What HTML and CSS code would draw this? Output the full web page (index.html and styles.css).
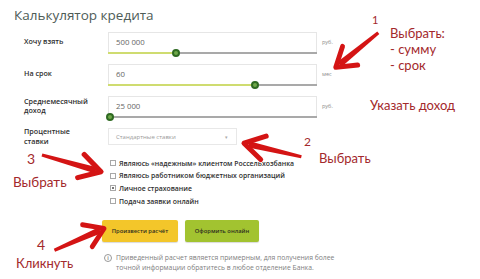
FILE: index.html
```html
<!DOCTYPE html>
<html lang="ru">
<head>
  <meta charset="UTF-8" />
  <meta name="viewport" content="width=device-width, initial-scale=1" />
  <title>Калькулятор кредита</title>
  <link rel="stylesheet" href="styles.css">
</head>
<body>
  <div class="page">
    <h1 class="title">Калькулятор кредита</h1>

    <div class="calc">
      <div class="row">
        <div class="label">Хочу взять</div>
        <div class="field">
          <div class="input">500 000</div>
          <div class="track"><div class="fill" style="width:32.5%"></div><span class="knob" style="left:32.5%"></span></div>
        </div>
        <div class="unit">руб.</div>
      </div>

      <div class="row">
        <div class="label">На срок</div>
        <div class="field">
          <div class="input">60</div>
          <div class="track"><div class="fill" style="width:70.5%"></div><span class="knob" style="left:70.5%"></span></div>
        </div>
        <div class="unit">мес</div>
      </div>

      <div class="row">
        <div class="label">Среднемесячный<br>доход</div>
        <div class="field">
          <div class="input">25 000</div>
          <div class="track"><div class="fill" style="width:1%"></div><span class="knob" style="left:1%"></span></div>
        </div>
        <div class="unit">руб.</div>
      </div>

      <div class="row rates">
        <div class="label">Процентные<br>ставки</div>
        <div class="select">
          <span>Стандартные ставки</span>
          <span class="caret">&#9662;</span>
        </div>
      </div>

      <ul class="checks">
        <li><span class="box"></span>Являюсь «надежным» клиентом Россельхозбанка</li>
        <li><span class="box"></span>Являюсь работником бюджетных организаций</li>
        <li><span class="box checked"></span>Личное страхование</li>
        <li><span class="box"></span>Подача заявки онлайн</li>
      </ul>

      <div class="buttons">
        <button class="btn btn-yellow">Произвести расчёт</button>
        <button class="btn btn-green">Оформить онлайн</button>
      </div>

      <div class="info">
        <span class="info-icon">i</span>
        <p>Приведенный расчет является примерным, для получения более<br>точной информации обратитесь в любое отделение Банка.</p>
      </div>
    </div>
  </div>

  <!-- red hand-made annotations over the screenshot -->
  <svg class="arrows" width="480" height="279" viewBox="0 0 480 279">
    <defs>
      <g id="arrow">
        <path d="M-60 -1.6 L-6 -3.2 L-6 3.2 L-60 1.6 Z" fill="#d41414" />
        <path d="M-21 -12 L-1 0 L-21 12" fill="none" stroke="#d41414" stroke-width="5" stroke-linecap="round" stroke-linejoin="round" />
      </g>
    </defs>
    <use href="#arrow" transform="translate(335 68) rotate(140.9) scale(0.93 1)" />
    <use href="#arrow" transform="translate(243 143) rotate(193.3)" />
    <use href="#arrow" transform="translate(102 172) rotate(15.8) scale(1.04 1)" />
    <use href="#arrow" transform="translate(105 228) rotate(-23.7) scale(0.92 1)" />
  </svg>

  <div class="note num n1">1</div>
  <div class="note n1-text">Выбрать:<br>- сумму<br>- срок</div>
  <div class="note n-income">Указать доход</div>
  <div class="note num n2">2</div>
  <div class="note n2-text">Выбрать</div>
  <div class="note num big n3">3</div>
  <div class="note n3-text">Выбрать</div>
  <div class="note num big n4">4</div>
  <div class="note n4-text">Кликнуть</div>
</body>
</html>
```

FILE: styles.css
```css
* { box-sizing: border-box; }
html, body {
  margin: 0;
  width: 480px;
  height: 279px;
  overflow: hidden;
  background: #fff;
}
body {
  position: relative;
  font-family: 'Open Sans', sans-serif;
  color: #333;
}
.page {
  padding: 6px 0 0 14px;
}
.title {
  margin: 0;
  font-size: 13.5px;
  line-height: 18px;
  font-weight: 400;
  color: #4e5c57;
}
.calc {
  margin-top: 8px;
  padding-left: 10px;
}
.row {
  display: flex;
  align-items: flex-start;
  margin-bottom: 10px;
}
.label {
  width: 84px;
  height: 20px;
  display: flex;
  align-items: center;
  font-size: 7.2px;
  line-height: 9.5px;
  font-weight: 600;
  color: #2e2e2e;
}
.field {
  width: 209px;
}
.input {
  height: 20px;
  border: 1px solid #e6e6e6;
  border-bottom: none;
  padding-left: 7px;
  font-size: 7.8px;
  line-height: 19px;
  color: #666;
}
.track {
  position: relative;
  height: 2px;
  background: #a9a9a9;
}
.fill {
  height: 100%;
  background: #cfdc70;
}
.knob {
  position: absolute;
  top: -3px;
  width: 8px;
  height: 8px;
  margin-left: -4px;
  border-radius: 50%;
  background: #6fa84a;
  border: 2px solid #2f6a22;
}
.unit {
  margin-left: 5px;
  height: 20px;
  line-height: 20px;
  font-size: 5.5px;
  color: #8a8a8a;
}
.rates {
  margin-top: 4px;
  margin-bottom: 0;
}
.rates .label {
  height: 17px;
}
.select {
  width: 129px;
  height: 17px;
  border: 1px solid #e8e8e8;
  display: flex;
  justify-content: space-between;
  align-items: center;
  padding: 0 8px 0 7px;
  font-size: 6px;
  color: #9a9a9a;
}
.caret {
  font-size: 5px;
  color: #aaa;
}
.checks {
  list-style: none;
  margin: 12px 0 0 84px;
  padding: 0 0 0 2px;
}
.checks li {
  display: flex;
  align-items: center;
  height: 12.6px;
  font-size: 6.9px;
  font-weight: 600;
  color: #2e2e2e;
}
.box {
  width: 6px;
  height: 6px;
  border: 1px solid #a8a8a8;
  margin-right: 3px;
  display: flex;
  align-items: center;
  justify-content: center;
}
.box.checked::after {
  content: '';
  width: 2px;
  height: 2px;
  background: #777;
}
.buttons {
  display: flex;
  gap: 7px;
  margin: 13px 0 0 78px;
}
.btn {
  width: 76px;
  height: 22px;
  border: none;
  border-radius: 2px;
  font-family: 'Open Sans', sans-serif;
  font-size: 5.8px;
  font-weight: 600;
  color: #2f2f20;
  box-shadow: 0 1px 1px rgba(0,0,0,0.15);
  padding: 0;
}
.btn-yellow { background: #f3c62a; }
.btn-green { width: 74px; background: #a2c330; }
.info {
  display: flex;
  align-items: flex-start;
  margin: 11px 0 0 80px;
}
.info-icon {
  width: 8px;
  height: 8px;
  margin-top: 1px;
  margin-right: 4px;
  border: 1px solid #999;
  border-radius: 50%;
  font-size: 5px;
  line-height: 6px;
  text-align: center;
  color: #888;
  font-weight: 700;
}
.info p {
  margin: 0;
  font-size: 6.8px;
  line-height: 10px;
  color: #808080;
}

/* annotations */
.arrows {
  position: absolute;
  left: 0;
  top: 0;
}
.note {
  position: absolute;
  font-family: 'Lato', sans-serif;
  font-size: 13px;
  line-height: 16px;
  color: #a3292c;
  white-space: nowrap;
}
.num { font-size: 11px; }
.num.big { font-size: 14px; }
.n1 { left: 372px; top: 12px; }
.n1-text { left: 390px; top: 25px; }
.n-income { left: 370px; top: 97px; }
.n2 { left: 304px; top: 134px; font-size: 12px; }
.n2-text { left: 319px; top: 150px; }
.n3 { left: 27px; top: 151px; }
.n3-text { left: 13px; top: 174px; font-size: 13.5px; }
.n4 { left: 37px; top: 237px; }
.n4-text { left: 16px; top: 255px; }
```
